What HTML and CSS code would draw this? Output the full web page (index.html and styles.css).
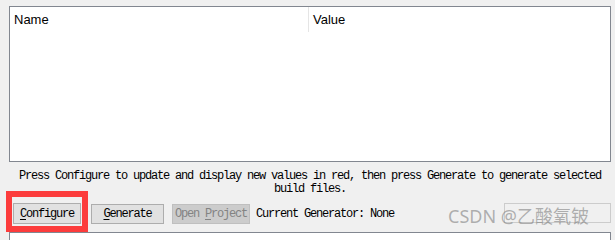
FILE: index.html
```html
<!DOCTYPE html>
<html lang="en">
  <head>
    <meta charset="UTF-8" />
    <title>CMake</title>
    <link rel="stylesheet" href="styles.css">
  </head>
  <body>
    <div class="main">
      <div class="cache-table">
        <div class="table-head">
          <div class="head-cell name-col">Name</div>
          <div class="head-cell">Value</div>
        </div>
      </div>

      <div class="status-text">
        Press Configure to update and display new values in red, then press Generate to generate selected<br />
        build files.
      </div>

      <div class="button-row">
        <span class="highlight">
          <button class="btn btn-configure"><u>C</u>onfigure</button>
        </span>
        <button class="btn btn-generate"><u>G</u>enerate</button>
        <button class="btn btn-open" disabled>Open <u>P</u>roject</button>
        <span class="generator-label">Current Generator: None</span>
        <span class="spacer"></span>
        <button class="btn btn-blank" disabled></button>
      </div>

      <div class="output-box"></div>
    </div>

    <div class="watermark">CSDN @乙酸氧铍</div>
  </body>
</html>
```

FILE: styles.css
```css
* {
  margin: 0;
  padding: 0;
  box-sizing: border-box;
}

body {
  width: 615px;
  height: 240px;
  overflow: hidden;
  background: #f0f0f0;
  font-family: "Liberation Sans", Arial, sans-serif;
  color: #000;
  position: relative;
}

.main {
  padding: 6px 4px 0 9px;
}

.cache-table {
  height: 156px;
  background: #fff;
  border: 1px solid #828790;
}

.table-head {
  display: grid;
  grid-template-columns: 299px 1fr;
  height: 25px;
}

.head-cell {
  font-size: 13px;
  line-height: 25px;
  padding-left: 4px;
  color: #000;
}

.name-col {
  border-right: 1px solid #e5e5e5;
}

.status-text {
  margin-top: 8px;
  text-align: center;
  font-family: "Liberation Mono", "Courier New", monospace;
  font-size: 12px;
  letter-spacing: -1.2px;
  line-height: 13px;
  color: #000;
}

.button-row {
  display: flex;
  align-items: center;
  margin-top: 7px;
  height: 21px;
}

.btn {
  font-family: "Liberation Mono", "Courier New", monospace;
  font-size: 12px;
  letter-spacing: -1.2px;
  height: 20px;
  background: #e1e1e1;
  border: 1px solid #adadad;
  color: #000;
}

.btn u {
  text-underline-offset: 2px;
}

.highlight {
  position: relative;
  display: flex;
  margin-left: 4px;
}

.highlight::after {
  content: "";
  position: absolute;
  top: -12px;
  left: -7px;
  right: -7px;
  bottom: -8px;
  border: 6px solid #fc3c3c;
}

.btn-configure {
  width: 68px;
  height: 21px;
}

.btn-generate {
  width: 73px;
  margin-left: 10px;
}

.btn-open {
  width: 78px;
  margin-left: 8px;
  background: #cccccc;
  border-color: #bfbfbf;
  color: #838383;
}

.generator-label {
  margin-left: 6px;
  font-family: "Liberation Mono", "Courier New", monospace;
  font-size: 12px;
  letter-spacing: -1.2px;
}

.spacer {
  flex: 1;
}

.btn-blank {
  width: 107px;
  height: 20px;
  margin-top: -2px;
  background: #f0f0f0;
  border-color: #cccccc;
}

.output-box {
  margin-top: 8px;
  height: 20px;
  background: #fff;
  border: 1px solid #828790;
}

.watermark {
  position: absolute;
  left: 448px;
  top: 203px;
  font-family: "Noto Sans", "Noto Sans CJK SC", sans-serif;
  font-size: 18px;
  line-height: 26px;
  color: rgba(128, 128, 128, 0.6);
  white-space: nowrap;
}
```
